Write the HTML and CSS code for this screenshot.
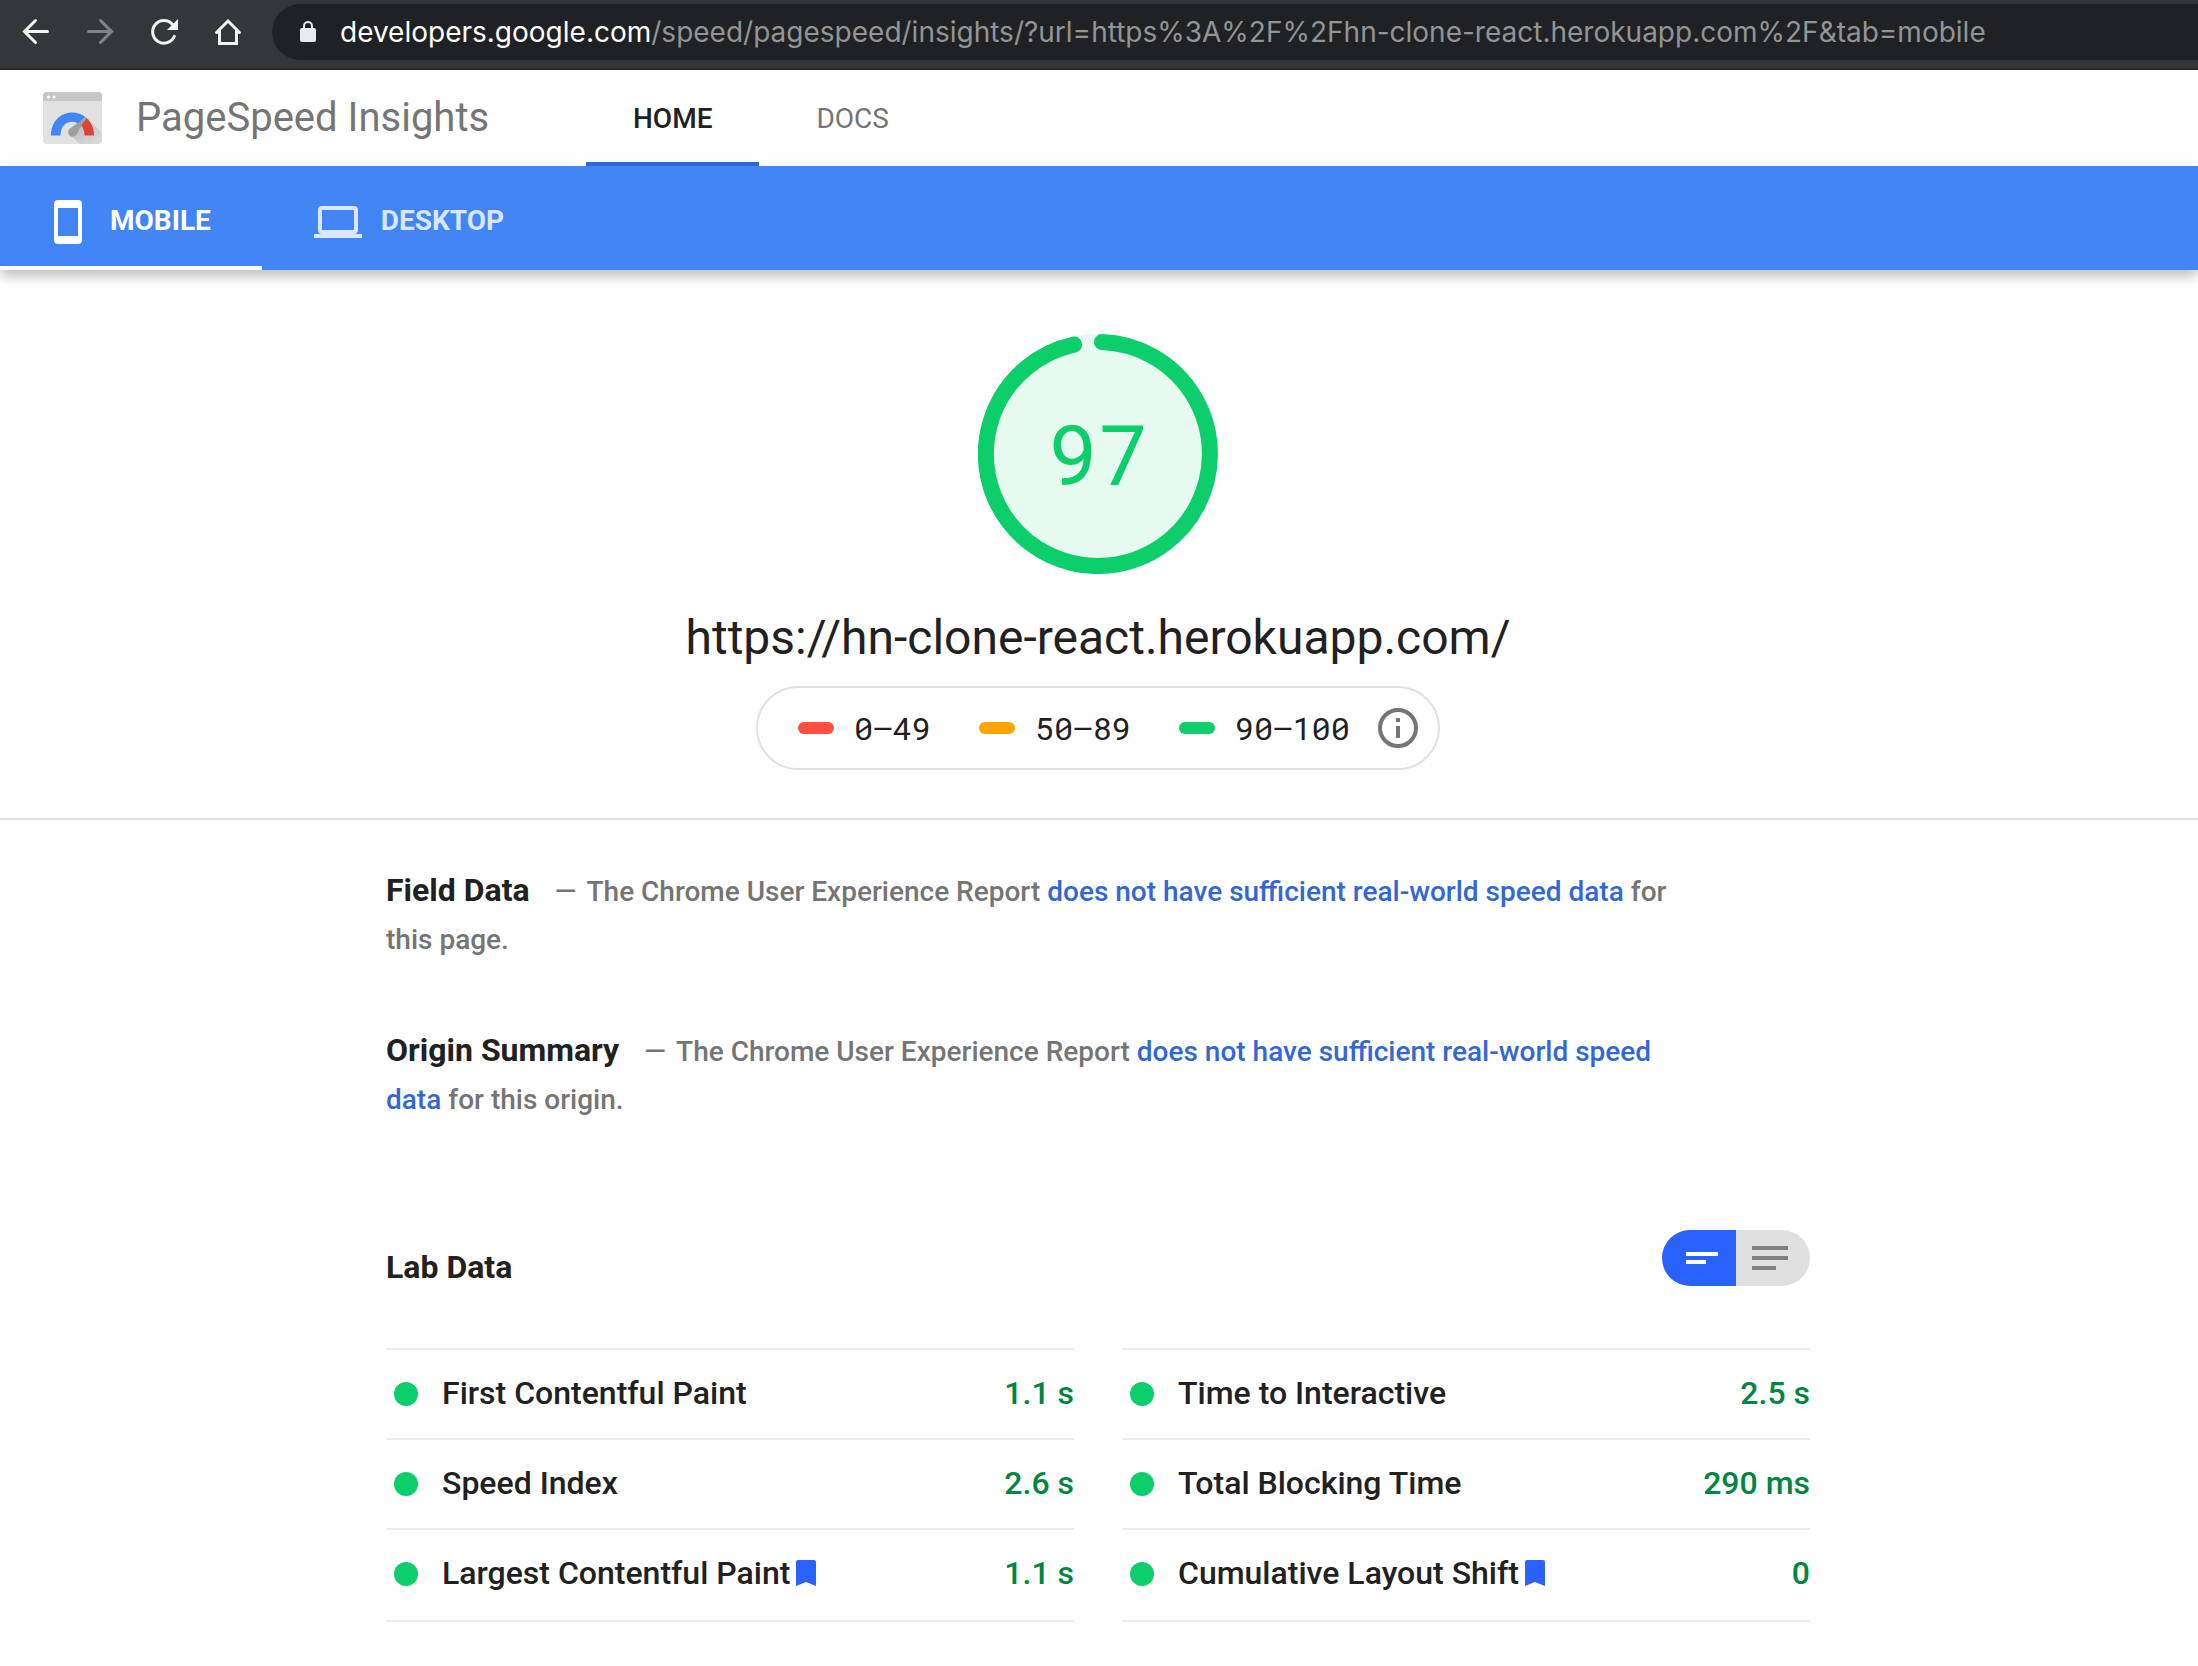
FILE: index.html
```html
<!DOCTYPE html>
<html lang="en">
<head>
<meta charset="utf-8">
<title>PageSpeed Insights</title>
<link rel="stylesheet" href="styles.css">
</head>
<body>
<div class="browser-bar">
  <button class="nav-button" aria-label="Back"><svg viewBox="0 0 28 28"><path d="M25.500 13.500H3M13.500 2.500L2.500 13.500l11 11" fill="none" stroke="#f1f3f4" stroke-width="3" stroke-linecap="round"/></svg></button>
  <button class="nav-button" aria-label="Forward"><svg viewBox="0 0 28 28"><path d="M2.500 13.500h22M14.500 2.500l11 11-11 11" fill="none" stroke="#828386" stroke-width="3" stroke-linecap="round"/></svg></button>
  <button class="nav-button" aria-label="Reload"><svg viewBox="0 0 28 28"><path d="M24.300 18.400A11.300 11.300 0 1 1 22.500 6.500" fill="none" stroke="#f1f3f4" stroke-width="3" stroke-linecap="round"/><path d="M28 1v11H17z" fill="#f1f3f4"/></svg></button>
  <button class="nav-button" aria-label="Home"><svg viewBox="0 0 28 28"><path d="M2.500 14.500L14 3l11.500 11.500M5.500 12v13.500h17V12" fill="none" stroke="#f1f3f4" stroke-width="3" stroke-linecap="round"/></svg></button>
  <div class="address">
    <svg class="lock" viewBox="0 0 18 22"><rect x="1" y="7" width="16" height="14" rx="2" fill="#e8eaed"/><path d="M5 8V5a4 4 0 0 1 8 0v3" fill="none" stroke="#e8eaed" stroke-width="2"/></svg>
    <span class="address-text"><span class="address-host">developers.google.com</span>/speed/pagespeed/insights/?url=https%3A%2F%2Fhn-clone-react.herokuapp.com%2F&amp;tab=mobile</span>
  </div>
</div>
<header class="site-header">
  <svg class="logo" viewBox="0 0 59 52">
    <defs><linearGradient id="logo-shade" x1="0" y1="0" x2="1" y2="1"><stop offset="0" stop-color="#b4b4b4"/><stop offset="1" stop-color="#dcdcdc"/></linearGradient></defs>
    <rect x="0" y="0" width="59" height="52" rx="4" fill="#e1e1e1"/>
    <path d="M0 9V4a4 4 0 0 1 4-4h51a4 4 0 0 1 4 4v5z" fill="#c6c6c6"/>
    <circle cx="5.500" cy="5" r="1.500" fill="#fff"/><circle cx="11" cy="5" r="1.500" fill="#fff"/>
    <path d="M43 25l16 16v7a4 4 0 0 1-4 4H37L26 42z" fill="url(#logo-shade)"/>
    <path d="M8 43.500C8 30 17 20.500 29.500 20.500c5 0 9 1.500 13 4.500l-7.500 6.500c-8-4.500-17.500.5-17.500 12z" fill="#4285f4"/>
    <path d="M43.500 26c5 4.500 7.500 10.500 7.500 17.500h-9.500c0-4-1-7.500-3.500-10z" fill="#db4437"/>
    <path d="M43.500 25L27 36.500a4.500 4.500 0 1 0 6.500 6z" fill="#9e9e9e"/>
  </svg>
  <div class="site-title">PageSpeed Insights</div>
  <nav class="site-nav">
    <a class="site-link is-active" href="#home">HOME</a>
    <a class="site-link" href="#docs">DOCS</a>
  </nav>
</header>
<nav class="device-bar">
  <button class="device is-active"><svg class="phone" viewBox="0 0 28 44"><path fill="#fff" fill-rule="evenodd" d="M4 0h20a4 4 0 0 1 4 4v36a4 4 0 0 1-4 4H4a4 4 0 0 1-4-4V4a4 4 0 0 1 4-4zM4 8v28h20V8z"/></svg>MOBILE</button>
  <button class="device"><svg class="laptop" viewBox="0 0 48 32"><path fill="currentColor" fill-rule="evenodd" d="M8 0h32a4 4 0 0 1 4 4v20a4 4 0 0 1-4 4h8v4H0v-4h8a4 4 0 0 1-4-4V4a4 4 0 0 1 4-4zM8 4v20h32V4z"/></svg>DESKTOP</button>
</nav>
<main>
  <section class="summary">
    <div class="gauge">
      <svg class="gauge-ring" viewBox="0 0 240 240"><circle cx="120" cy="120" r="120" fill="#e6faf0"/><path d="M124 8.100A112 112 0 1 1 96 10.600" fill="none" stroke="#0cce6b" stroke-width="16" stroke-linecap="round"/></svg>
      <span class="gauge-score">97</span>
    </div>
    <h1 class="tested-url">https://hn-clone-react.herokuapp.com/</h1>
    <div class="scale">
      <span class="range"><i class="swatch swatch-poor"></i>0–49</span>
      <span class="range"><i class="swatch swatch-medium"></i>50–89</span>
      <span class="range"><i class="swatch swatch-good"></i>90–100</span>
      <button class="info" aria-label="Score information"><svg viewBox="0 0 40 40"><circle cx="20" cy="20" r="18" fill="none" stroke="#757575" stroke-width="4"/><path d="M18 18h4v12h-4zM18 10h4v4h-4z" fill="#757575"/></svg></button>
    </div>
  </section>
  <div class="report">
    <section class="note"><h2 class="heading">Field Data</h2><span class="dash">—</span> The Chrome User Experience Report <a href="#field">does not have sufficient real-world speed data</a> for this page.</section>
    <section class="note"><h2 class="heading">Origin Summary</h2><span class="dash">—</span> The Chrome User Experience Report <a href="#origin">does not have sufficient real-world speed data</a> for this origin.</section>
    <section class="lab">
      <div class="lab-header">
        <h2 class="heading">Lab Data</h2>
        <div class="view-toggle">
          <button class="view is-active" aria-label="Compact view"><svg viewBox="0 0 74 56"><path d="M24 22h32v4H24zM24 30h20v4H24z" fill="#fff"/></svg></button>
          <button class="view" aria-label="Expanded view"><svg viewBox="0 0 74 56"><path d="M16 16h36v4H16zM16 26h36v4H16zM16 36h24v4H16z" fill="#808080"/></svg></button>
        </div>
      </div>
      <div class="metrics">
        <ul class="metric-list">
          <li class="metric"><i class="dot"></i>First Contentful Paint<span class="value">1.1 s</span></li>
          <li class="metric"><i class="dot"></i>Speed Index<span class="value">2.6 s</span></li>
          <li class="metric"><i class="dot"></i>Largest Contentful Paint<svg class="bookmark" viewBox="0 0 20 26"><path d="M2 0h16a2 2 0 0 1 2 2v24l-10-4-10 4V2a2 2 0 0 1 2-2z" fill="#2962ff"/></svg><span class="value">1.1 s</span></li>
        </ul>
        <ul class="metric-list">
          <li class="metric"><i class="dot"></i>Time to Interactive<span class="value">2.5 s</span></li>
          <li class="metric"><i class="dot"></i>Total Blocking Time<span class="value">290 ms</span></li>
          <li class="metric"><i class="dot"></i>Cumulative Layout Shift<svg class="bookmark" viewBox="0 0 20 26"><path d="M2 0h16a2 2 0 0 1 2 2v24l-10-4-10 4V2a2 2 0 0 1 2-2z" fill="#2962ff"/></svg><span class="value">0</span></li>
        </ul>
      </div>
    </section>
  </div>
</main>
</body>
</html>
```
FILE: styles.css
```css
* { box-sizing: border-box; }
body { margin: 0; background: #fff; color: #212121; font-family: Roboto, "Liberation Sans", sans-serif; font-size: 32px; }
button { border: 0; padding: 0; background: none; font: inherit; color: inherit; }
a { color: #3367d6; text-decoration: none; }
h1, h2, ul { margin: 0; padding: 0; }
svg { display: block; flex: none; }

.browser-bar { display: flex; align-items: center; height: 70px; padding: 4px 0 8px 22px; background: #35363a; border-bottom: 2px solid #28292a; overflow: hidden; }
.nav-button { flex: none; width: 28px; height: 28px; margin-right: 36px; }
.address { display: flex; flex: 1; align-items: center; height: 56px; margin-left: -6px; padding-left: 27px; border-radius: 28px 0 0 28px; background: #202124; }
.lock { width: 18px; height: 22px; }
.address-text { margin-left: 23px; color: #939495; font-family: Inter, sans-serif; font-size: 28px; white-space: nowrap; }
.address-host { color: #fff; }

.site-header { display: flex; align-items: center; height: 96px; padding-left: 43px; }
.logo { width: 59px; height: 52px; }
.site-title { width: 450px; margin-left: 34px; padding-bottom: 2px; color: #757575; font-size: 40px; white-space: nowrap; }
.site-nav { display: flex; gap: 10px; height: 100%; }
.site-link { display: flex; align-items: center; padding: 4px 47px 0; border-bottom: 4px solid transparent; color: #757575; font-size: 28px; }
.site-link.is-active { border-color: #3367d6; color: #212121; font-weight: 500; }

.device-bar { display: flex; height: 104px; background: #4285f4; box-shadow: 0 6px 12px rgba(0, 0, 0, 0.26); }
.device { display: flex; align-items: center; padding: 8px 51px 0 52px; border-bottom: 4px solid transparent; color: #dbe6fd; font-size: 28px; font-weight: 700; }
.device.is-active { padding-left: 54px; border-color: #fff; color: #fff; }
.phone { width: 28px; height: 44px; margin: 4px 28px 0 0; }
.laptop { width: 48px; height: 32px; margin: 4px 19px 0 0; }

.summary { display: flex; flex-direction: column; align-items: center; padding: 64px 2px 48px 0; border-bottom: 2px solid #e0e0e0; }
.gauge { display: grid; place-items: center; }
.gauge > * { grid-area: 1 / 1; }
.gauge-ring { width: 240px; height: 240px; }
.gauge-score { padding-bottom: 4px; color: #0cce6b; font-family: "Roboto Mono", Roboto, sans-serif; font-size: 84px; }
.tested-url { margin-top: 32px; font-size: 48px; font-weight: 400; line-height: 64px; }
.scale { display: flex; align-items: center; height: 84px; margin-top: 16px; padding: 0 20px 2px 40px; border: 2px solid #e0e0e0; border-radius: 42px; font-family: "Roboto Mono", "Liberation Mono", monospace; font-size: 32px; }
.range { display: flex; align-items: center; margin-right: 48px; }
.range:nth-child(3) { margin-right: 28px; }
.swatch { width: 36px; height: 12px; margin: 2px 20px 0 0; border-radius: 6px; }
.swatch-poor { background: #ff4e42; }
.swatch-medium { background: #ffa400; }
.swatch-good { background: #0cce6b; }
.info { width: 40px; height: 40px; margin-top: 2px; }

.report { width: 65%; max-width: 1426px; margin: 0 auto; padding: 48px 2px 0 0; }
.note { max-width: 1300px; margin-bottom: 64px; color: #757575; font-size: 28px; font-weight: 500; line-height: 48px; }
.heading { color: #212121; font-size: 32px; font-weight: 700; line-height: 48px; }
.note .heading { display: inline; line-height: 32px; }
.dash { margin: 0 4px 0 25px; }
.lab-header { display: flex; justify-content: space-between; height: 160px; padding-top: 42px; }
.lab-header .heading { padding-top: 13px; }
.view-toggle { display: flex; height: 56px; border-radius: 28px; overflow: hidden; background: #e0e0e0; }
.view { width: 74px; height: 56px; }
.view.is-active { background: #2962ff; }
.metrics { display: grid; grid-template-columns: 1fr 1fr; gap: 48px; }
.metric-list { list-style: none; padding-bottom: 2px; border-bottom: 2px solid #ebebeb; }
.metric { display: flex; align-items: center; height: 90px; padding: 0 0 2px 8px; border-top: 2px solid #ebebeb; font-weight: 500; }
.dot { width: 24px; height: 24px; margin: 2px 24px 0 0; border-radius: 50%; background: #0cce6b; }
.bookmark { width: 20px; height: 26px; margin-left: 6px; }
.value { margin-left: auto; color: #018642; }
```
